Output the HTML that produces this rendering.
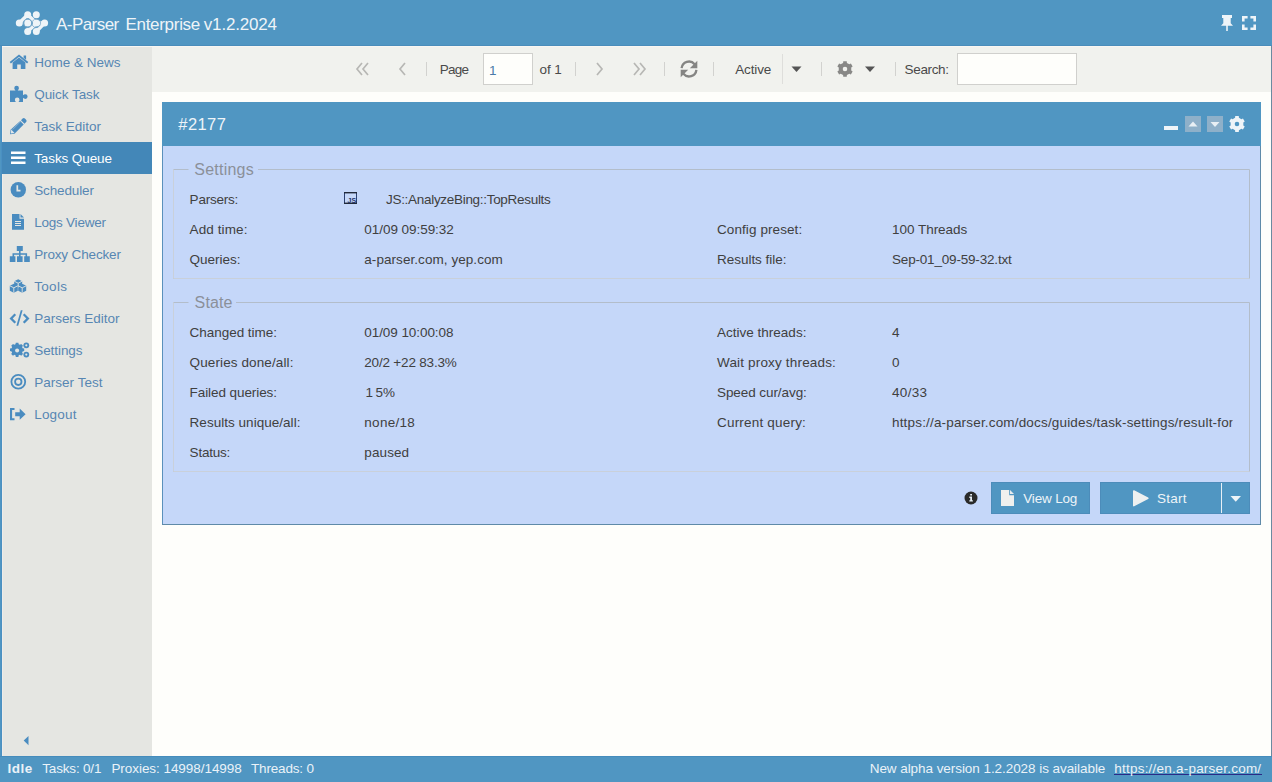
<!DOCTYPE html>
<html><head><meta charset="utf-8">
<style>
*{margin:0;padding:0}
html,body{width:1272px;height:782px;overflow:hidden;background:#fefefb}
svg{position:absolute;left:0;top:0;display:block}
text{font-family:"Liberation Sans",sans-serif;white-space:pre}
</style></head><body>
<svg width="1272" height="782" viewBox="0 0 1272 782">
<defs>
 <clipPath id="cq"><rect x="880" y="410" width="352.5" height="25"/></clipPath>
</defs>
<!-- page bg -->
<rect x="0" y="0" width="1272" height="782" fill="#fefefb"/>
<!-- header -->
<rect x="0" y="0" width="1272" height="46" fill="#5096c2"/>
<rect x="0" y="45" width="1272" height="1" fill="#4a8dbb"/>
<!-- logo -->
<g transform="translate(14,9)">
 <g fill="#eef4f8">
  <circle cx="13.7" cy="5.7" r="3.5"/><circle cx="22.3" cy="5.7" r="3.5"/>
  <circle cx="5.3" cy="14.1" r="3.5"/><circle cx="13.7" cy="14.1" r="3.5"/><circle cx="22.3" cy="14.1" r="3.5"/><circle cx="30.6" cy="14.1" r="3.5"/>
  <circle cx="13.7" cy="22.4" r="3.5"/><circle cx="22.3" cy="22.4" r="3.5"/>
 </g>
 <g stroke="#eef4f8" stroke-width="3.6" fill="none" stroke-linecap="round">
  <path d="M5.3 14.1 L13.7 5.7 M22.3 14.1 L30.6 14.1 M22.3 22.4 L30.6 14.1 M13.7 22.4 L22.3 14.1 M13.7 5.7 L22.3 14.1"/>
 </g>
 <path d="M9.6 14.1 a4.1 4.1 0 0 1 8.2 0 a4.4 4.4 0 0 0 8.8 0 a4.1 4.1 0 0 0 -8.2 0 a4.4 4.4 0 0 1 -8.8 0" stroke="#7eaaca" stroke-width="0.8" fill="none"/>
</g>
<!-- pin -->
<path fill="#eef4f8" d="M1222 15h10v3h-1.3v5.2l2.3 2.5h-5.2v5.3h-1.6v-5.3H1221l2.3-2.5V18H1222z"/>
<!-- fullscreen -->
<path fill="#eef4f8" d="M1242 16h5.6v2.6h-3v2.8H1242z M1256 16h-5.6v2.6h3v2.8h2.6z M1242 30h5.6v-2.6h-3v-2.8H1242z M1256 30h-5.6v-2.6h3v-2.8h2.6z"/>

<!-- borders -->
<rect x="0" y="46" width="2" height="710" fill="#5096c2"/><rect x="1" y="46" width="1" height="710" fill="#4a90c2"/>
<rect x="1271" y="46" width="1" height="710" fill="#6b8aa0"/>
<rect x="2" y="46" width="1269" height="1" fill="#f8f6f2"/>
<!-- sidebar -->
<rect x="2" y="47" width="150" height="709" fill="#e5e6e2"/>
<rect x="2" y="47" width="1" height="709" fill="#edece9"/>
<rect x="2" y="142" width="150" height="32" fill="#4387b8"/>

<!-- menu icons -->
<g fill="#4a8cc0">
 <!-- home (10-28, 55-69) -->
 <path d="M19 54.5l9.3 7.6-1.2 1.3-8.1-6.6-8.1 6.6-1.2-1.3z M23.6 55.5h2.5v4.2l-2.5-2z M12.6 62.6l6.4-5.2 6.4 5.2v6.4h-4.6v-4.5h-3.6v4.5h-4.6z"/>
 <!-- puzzle (10-28, 86-102) -->
 <path d="M10 90.5h5.5c-.9-.9-1.2-1.7-1.2-2.4a2.3 2.3 0 0 1 4.6 0c0 .7-.3 1.5-1.2 2.4h5.3v4.8c.9-.8 1.6-1 2.3-1a2.3 2.3 0 0 1 0 4.6c-.7 0-1.4-.3-2.3-1.1v4.2h-4.5c.8-.9 1-1.5 1-2.2a2.3 2.3 0 0 0-4.6 0c0 .7.2 1.3 1 2.2H10z"/>
 <!-- pencil (10-26, 118-134) -->
 <path d="M22.6 118.6a1.6 1.6 0 0 1 2.3 0l1.2 1.2a1.6 1.6 0 0 1 0 2.3l-1.6 1.6-3.5-3.5z"/>
 <path d="M20.2 121l3.5 3.5-9.2 9.2-4.5 0.6 0.6-4.5z"/>
 <!-- clock -->
 <circle cx="18.3" cy="189.8" r="7.7"/>
 <!-- file (12-24, 214-230) -->
 <path d="M12 214h7.5v4.8h4.5v11H12z"/>
 <!-- sitemap (10-30, 246-262) -->
 <path d="M16.8 246h6v5h-6z M19 251h1.6v2.8H19z M12.5 253.2h14.6v1.6H12.5z M12.5 253.2h1.6v3h-1.6z M19 253.2h1.6v3H19z M25.5 253.2h1.6v3h-1.6z M9.8 256.2h5.6v5.8H9.8z M17 256.2h5.6v5.8H17z M24.2 256.2h5.6v5.8h-5.6z"/>
 <!-- cubes (10-26, 279-293) -->
 <path d="M14.2 281.2l4-2 4 2v4.3l-4 2-4-2z M9.8 285.8l4-2 4 2v5l-4 2-4-2z M18.2 285.8l4-2 4 2v5l-4 2-4-2z"/>
 <!-- code (10-30, 310-326) -->
 <path d="M14.5 313.5l1.6 1.6-3.4 3.4 3.4 3.4-1.6 1.6-5-5z M24.5 313.5l-1.6 1.6 3.4 3.4-3.4 3.4 1.6 1.6 5-5z M20.8 310.2h1.8l-4.4 15.6h-1.8z"/>
 <!-- cogs -->
 <g transform="translate(0.5,-1.5)"><path d="M15.3 344.2h2.6l.3 1.6 1.2.5 1.3-.9 1.8 1.8-.9 1.3.5 1.2 1.6.3v2.6l-1.6.3-.5 1.2.9 1.3-1.8 1.8-1.3-.9-1.2.5-.3 1.6h-2.6l-.3-1.6-1.2-.5-1.3.9-1.8-1.8.9-1.3-.5-1.2-1.6-.3v-2.6l1.6-.3.5-1.2-.9-1.3 1.8-1.8 1.3.9 1.2-.5z"/></g>
 <circle cx="26.3" cy="345.3" r="2.9"/><circle cx="26.3" cy="354.6" r="2.9"/>
 <!-- logout (10-26, 408-420) -->
 <path d="M10 408h4.5v2h-2.4v8.2h2.4v2H10z M15.2 412.2h4.5v-3.6l5.9 5.6-5.9 5.6v-3.6h-4.5z"/>
 <path d="M20.5 214l3.5 3.6h-3.5z"/>
 <!-- collapse arrow -->
 <path d="M28.5 736v9.2l-4.8-4.6z"/>
</g>
<g fill="#e5e6e2">
 <path d="M12.6 129.6l8.3-8.3" stroke="#8fb4d4" stroke-width="0.9"/>
 <path d="M11.2 129.6l3.3 3.3-3.7.5z" fill="#dfe6ea"/>
 
 <rect x="15" y="221" width="6" height="1"/><rect x="15" y="223" width="6" height="1"/><rect x="15" y="225" width="6" height="1"/>
 <path d="M14.2 281.2l4 2 4-2 M18.2 283.2v4.3 M9.8 285.8l4 2 4-2 M13.8 287.8v4.9 M18.2 285.8l4 2 4-2 M22.2 287.8v4.9" stroke="#e5e6e2" stroke-width="0.9" fill="none"/>
 <circle cx="17.1" cy="350.5" r="2"/>
 <circle cx="26.3" cy="345.3" r="1.1"/><circle cx="26.3" cy="354.6" r="1.1"/>
</g>
<path d="M17.3 185.2v5.5h3.2" stroke="#e5e6e2" stroke-width="1.7" fill="none"/>
<circle cx="18.3" cy="381.8" r="6.9" stroke="#4a8cc0" stroke-width="1.8" fill="none"/>
<circle cx="18.3" cy="381.8" r="3.2" stroke="#4a8cc0" stroke-width="1.8" fill="none"/>
<!-- bars (active) -->
<path fill="#ffffff" d="M11 151.5h14.5v2.5H11z M11 156.6h14.5v2.5H11z M11 161.6h14.5v2.5H11z"/>

<!-- toolbar -->
<rect x="152" y="47" width="1119" height="45" fill="#f1f2ee"/>
<g stroke="#b7b7b4" stroke-width="1.7" fill="none">
 <path d="M362 63l-5 6 5 6 M368 63l-5 6 5 6"/>
 <path d="M405 63l-5 6 5 6"/>
 <path d="M597 63l5 6-5 6"/>
 <path d="M634 63l5 6-5 6 M640 63l5 6-5 6"/>
</g>
<g fill="#d2d2cf">
 <rect x="426" y="62" width="1" height="14"/>
 <rect x="575" y="62" width="1" height="14"/>
 <rect x="664" y="62" width="1" height="14"/>
 <rect x="713" y="62" width="1" height="14"/>
 <rect x="821" y="62" width="1" height="14"/>
 <rect x="895" y="62" width="1" height="14"/>
</g>
<rect x="782" y="54" width="1" height="30" fill="#dededb"/>
<rect x="483.5" y="53.5" width="49" height="31" fill="#fefefb" stroke="#d0d0cd" stroke-width="1"/>
<rect x="957.5" y="53.5" width="119" height="31" fill="#fefefb" stroke="#d0d0cd" stroke-width="1"/>
<!-- refresh -->
<g fill="#858583">
 <path d="M681.6 68.2 A7.4 7.4 0 0 1 694.6 64.2" stroke="#858583" stroke-width="2.3" fill="none"/>
 <path d="M689.8 68.2 L697.3 68.2 L697.3 60.8 z"/>
 <path d="M696.4 69.8 A7.4 7.4 0 0 1 683.4 73.8" stroke="#858583" stroke-width="2.3" fill="none"/>
 <path d="M688.2 69.8 L680.7 69.8 L680.7 77.2 z"/>
</g>
<path d="M791.5 66.5h10l-5 5.5z" fill="#555"/>
<path d="M865 66.5h10l-5 5.5z" fill="#555"/>
<path fill="#888886" fill-rule="evenodd" d="M843.09 62.89 L843.25 61.19 L846.75 61.19 L846.91 62.89 L849.33 64.29 L850.89 63.58 L852.63 66.61 L851.25 67.60 L851.25 70.40 L852.63 71.39 L850.89 74.42 L849.33 73.71 L846.91 75.11 L846.75 76.81 L843.25 76.81 L843.09 75.11 L840.67 73.71 L839.11 74.42 L837.37 71.39 L838.75 70.40 L838.75 67.60 L837.37 66.61 L839.11 63.58 L840.67 64.29Z M847.30 69.00 A2.3 2.3 0 1 0 842.70 69.00 A2.3 2.3 0 1 0 847.30 69.00Z"/>

<!-- panel -->
<rect x="162" y="102" width="1099" height="423" fill="#c5d7f9"/>
<rect x="162" y="102" width="1099" height="44" fill="#5096c2"/>
<rect x="162" y="146" width="1" height="379" fill="#5a90bb"/>
<rect x="1260" y="146" width="1" height="379" fill="#5f8aa8"/>
<rect x="162" y="524" width="1099" height="1" fill="#5f8aa8"/>
<!-- panel header tools -->
<rect x="1164" y="126" width="14" height="4" fill="#eef4f8"/>
<rect x="1185" y="116" width="16" height="16" fill="#8eb0c9"/>
<rect x="1207" y="116" width="16" height="16" fill="#8eb0c9"/>
<path d="M1188.5 126.5h9l-4.5-5z" fill="#e8eff4"/>
<path d="M1210.5 122h9l-4.5 5z" fill="#e8eff4"/>
<path fill="#eef4f8" fill-rule="evenodd" d="M1235.06 117.80 L1235.23 116.10 L1238.77 116.10 L1238.94 117.80 L1241.40 119.22 L1242.96 118.52 L1244.73 121.58 L1243.34 122.58 L1243.34 125.42 L1244.73 126.42 L1242.96 129.48 L1241.40 128.78 L1238.94 130.20 L1238.77 131.90 L1235.23 131.90 L1235.06 130.20 L1232.60 128.78 L1231.04 129.48 L1229.27 126.42 L1230.66 125.42 L1230.66 122.58 L1229.27 121.58 L1231.04 118.52 L1232.60 119.22Z M1239.30 124.00 A2.3 2.3 0 1 0 1234.70 124.00 A2.3 2.3 0 1 0 1239.30 124.00Z"/>

<!-- fieldsets -->
<g fill="none" stroke-width="1">
 <path d="M188.5 169.5H173.5V278.5H1249.5V169.5H258" stroke="#b3bdca"/>
 <path d="M173.5 169.5V278.5H1249.5" stroke="#c9d0da"/>
 <path d="M188.5 302.5H173.5V471.5H1249.5V302.5H236" stroke="#b3bdca"/>
 <path d="M173.5 302.5V471.5H1249.5" stroke="#c9d0da"/>
</g>
<!-- js icon -->
<rect x="344.5" y="192.5" width="12" height="11" fill="none" stroke="#2c4070" stroke-width="1"/>
<rect x="344" y="192" width="13" height="1.4" fill="#222a3a"/>
<rect x="344" y="202.6" width="13" height="1.4" fill="#222a3a"/>
<text x="347.6" y="202.6" font-size="7" font-weight="bold" fill="#24346a" font-family="Liberation Sans">JS</text>
<!-- info icon -->
<circle cx="971" cy="498" r="6.5" fill="#2a2a2a"/>
<path d="M970.2 494h1.8v1.6h-1.8z M969.3 496.6h2.7v3.6h.9v1.3h-3.6v-1.3h.9v-2.3h-.9z" fill="#e6eef4"/>
<!-- buttons -->
<rect x="991" y="482" width="99" height="32" fill="#5096c2"/>
<rect x="991.5" y="482.5" width="98" height="31" fill="none" stroke="#4c8cba"/>
<path d="M1001 490h8.2v5.3h4.8V506h-13z" fill="#f0f0ee"/>
<path d="M1010 490l4 4h-4z" fill="#e8ecee"/>
<rect x="1100" y="482" width="150" height="32" fill="#5096c2"/>
<rect x="1100.5" y="482.5" width="149" height="31" fill="none" stroke="#4c8cba"/>
<rect x="1221" y="483" width="1" height="30" fill="#e8f0f6"/>
<path d="M1133.8 491l14 7.3-14 7.3z" fill="#eef0f0" stroke="#eef0f0" stroke-width="1.6" stroke-linejoin="round"/>
<path d="M1230.5 496h10.5l-5.25 5.8z" fill="#eef4f8"/>

<!-- status bar -->
<rect x="0" y="756" width="1272" height="26" fill="#5096c2"/><rect x="0" y="756" width="1272" height="1" fill="#458cbc"/>
<rect x="1114" y="774" width="148" height="1" fill="#2a2a86"/>

<g>
<text x="56.00" y="30" font-size="17" letter-spacing="-0.552" fill="#eef4f8" >A-Parser</text>
<text x="125.50" y="30" font-size="17" letter-spacing="-0.302" fill="#eef4f8" >Enterprise</text>
<text x="203.80" y="30" font-size="17" letter-spacing="-0.177" fill="#eef4f8" >v1.2.2024</text>
<text x="34.20" y="67" font-size="13.5" letter-spacing="-0.006" fill="#5786b3" >Home &amp; News</text>
<text x="34.20" y="99" font-size="13.5" letter-spacing="-0.046" fill="#5786b3" >Quick Task</text>
<text x="34.20" y="131" font-size="13.5" letter-spacing="0.004" fill="#5786b3" >Task Editor</text>
<text x="34.20" y="163" font-size="13.5" letter-spacing="-0.097" fill="#ffffff" >Tasks Queue</text>
<text x="34.20" y="195" font-size="13.5" letter-spacing="-0.127" fill="#5786b3" >Scheduler</text>
<text x="34.20" y="227" font-size="13.5" letter-spacing="-0.225" fill="#5786b3" >Logs Viewer</text>
<text x="34.20" y="259" font-size="13.5" letter-spacing="-0.147" fill="#5786b3" >Proxy Checker</text>
<text x="34.20" y="291" font-size="13.5" letter-spacing="0.319" fill="#5786b3" >Tools</text>
<text x="34.20" y="323" font-size="13.5" letter-spacing="-0.017" fill="#5786b3" >Parsers Editor</text>
<text x="34.20" y="355" font-size="13.5" letter-spacing="-0.058" fill="#5786b3" >Settings</text>
<text x="34.20" y="387" font-size="13.5" letter-spacing="0.026" fill="#5786b3" >Parser Test</text>
<text x="34.20" y="419" font-size="13.5" letter-spacing="0.198" fill="#5786b3" >Logout</text>
<text x="439.70" y="74" font-size="13.5" letter-spacing="-0.707" fill="#4a4a4a" >Page</text>
<text x="489.00" y="75" font-size="13.5" letter-spacing="0.000" fill="#4a7aa8" >1</text>
<text x="539.50" y="74" font-size="13.5" letter-spacing="-0.115" fill="#4a4a4a" >of 1</text>
<text x="735.20" y="74" font-size="13.5" letter-spacing="-0.138" fill="#4a4a4a" >Active</text>
<text x="904.60" y="74" font-size="13.5" letter-spacing="-0.351" fill="#4a4a4a" >Search:</text>
<text x="178.30" y="130" font-size="16.5" letter-spacing="0.408" fill="#eef4f8" >#2177</text>
<text x="194.30" y="175" font-size="16" letter-spacing="0.223" fill="#8b9099" >Settings</text>
<text x="194.60" y="308" font-size="16" letter-spacing="0.110" fill="#8b9099" >State</text>
<text x="189.60" y="204" font-size="13.5" letter-spacing="-0.213" fill="#404040" >Parsers:</text>
<text x="189.60" y="234" font-size="13.5" letter-spacing="0.095" fill="#404040" >Add time:</text>
<text x="189.60" y="264" font-size="13.5" letter-spacing="-0.033" fill="#404040" >Queries:</text>
<text x="386.00" y="204" font-size="13.5" letter-spacing="-0.300" fill="#404040" >JS::AnalyzeBing::TopResults</text>
<text x="364.30" y="234" font-size="13.5" letter-spacing="-0.047" fill="#404040" >01/09 09:59:32</text>
<text x="364.30" y="264" font-size="13.5" letter-spacing="0.060" fill="#404040" >a-parser.com, yep.com</text>
<text x="717.00" y="234" font-size="13.5" letter-spacing="0.089" fill="#404040" >Config preset:</text>
<text x="717.00" y="264" font-size="13.5" letter-spacing="-0.025" fill="#404040" >Results file:</text>
<text x="892.00" y="234" font-size="13.5" letter-spacing="-0.023" fill="#404040" >100 Threads</text>
<text x="892.00" y="264" font-size="13.5" letter-spacing="-0.184" fill="#404040" >Sep-01_09-59-32.txt</text>
<text x="189.60" y="337" font-size="13.5" letter-spacing="-0.035" fill="#404040" >Changed time:</text>
<text x="364.30" y="337" font-size="13.5" letter-spacing="-0.070" fill="#404040" >01/09 10:00:08</text>
<text x="189.60" y="367" font-size="13.5" letter-spacing="0.109" fill="#404040" >Queries done/all:</text>
<text x="364.30" y="367" font-size="13.5" letter-spacing="-0.190" fill="#404040" >20/2 +22 83.3%</text>
<text x="189.60" y="397" font-size="13.5" letter-spacing="-0.083" fill="#404040" >Failed queries:</text>
<text x="189.60" y="427" font-size="13.5" letter-spacing="0.028" fill="#404040" >Results unique/all:</text>
<text x="364.30" y="427" font-size="13.5" letter-spacing="0.283" fill="#404040" >none/18</text>
<text x="189.60" y="457" font-size="13.5" letter-spacing="-0.209" fill="#404040" >Status:</text>
<text x="364.30" y="457" font-size="13.5" letter-spacing="0.104" fill="#404040" >paused</text>
<text x="365.50" y="397" font-size="13.5" letter-spacing="0.000" fill="#404040" >1</text>
<text x="375.50" y="397" font-size="13.5" letter-spacing="0.000" fill="#404040" >5%</text>
<text x="717.00" y="337" font-size="13.5" letter-spacing="0.007" fill="#404040" >Active threads:</text>
<text x="892.00" y="337" font-size="13.5" letter-spacing="0.000" fill="#404040" >4</text>
<text x="717.00" y="367" font-size="13.5" letter-spacing="0.169" fill="#404040" >Wait proxy threads:</text>
<text x="892.00" y="367" font-size="13.5" letter-spacing="0.000" fill="#404040" >0</text>
<text x="717.00" y="397" font-size="13.5" letter-spacing="-0.076" fill="#404040" >Speed cur/avg:</text>
<text x="892.00" y="397" font-size="13.5" letter-spacing="0.321" fill="#404040" >40/33</text>
<text x="717.00" y="427" font-size="13.5" letter-spacing="0.195" fill="#404040" >Current query:</text>
<text x="892.00" y="427" font-size="13.5" letter-spacing="0.173" fill="#404040" clip-path="url(#cq)">https://a-parser.com/docs/guides/task-settings/result-format</text>
<text x="1023.30" y="503" font-size="13.5" letter-spacing="-0.183" fill="#eef4f8" >View Log</text>
<text x="1156.90" y="503" font-size="13.5" letter-spacing="0.279" fill="#eef4f8" >Start</text>
<text x="7.50" y="773" font-size="13.5" letter-spacing="0.471" fill="#eaf2f8" font-weight="bold" >Idle</text>
<text x="42.30" y="773" font-size="13.5" letter-spacing="-0.183" fill="#eaf2f8" >Tasks: 0/1</text>
<text x="111.40" y="773" font-size="13.5" letter-spacing="-0.050" fill="#eaf2f8" >Proxies: 14998/14998</text>
<text x="251.00" y="773" font-size="13.5" letter-spacing="-0.170" fill="#eaf2f8" >Threads: 0</text>
<text x="869.70" y="773" font-size="13.5" letter-spacing="-0.059" fill="#eaf2f8" >New alpha version 1.2.2028 is available</text>
<text x="1114.30" y="773" font-size="13.5" letter-spacing="0.217" fill="#eaf2f8" >https://en.a-parser.com/</text>
</g>
</svg>
</body></html>
